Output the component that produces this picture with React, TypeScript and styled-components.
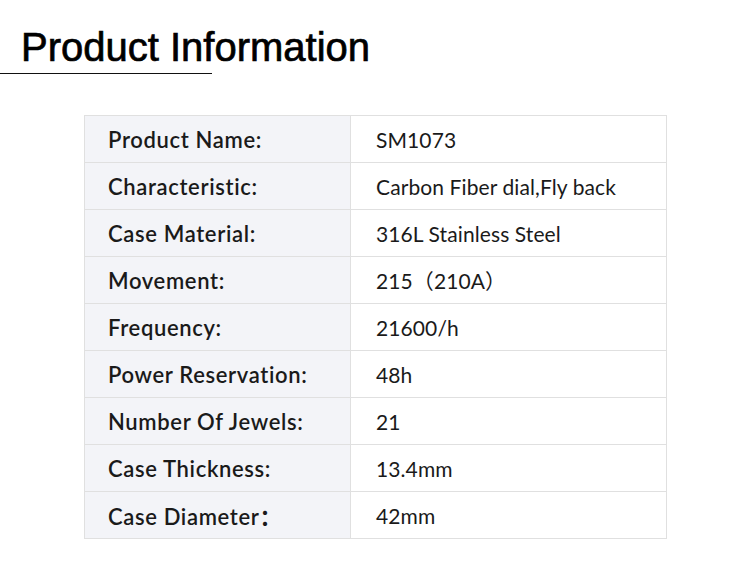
import React from "react";
import styled, { createGlobalStyle } from "styled-components";

const Global = createGlobalStyle`
  html, body { margin: 0; padding: 0; background: #fff; }
  body { width: 750px; height: 583px; overflow: hidden; }
`;

const Page = styled.div`
  width: 750px;
  height: 583px;
  background: #fff;
  display: flex;
  flex-direction: column;
`;

const Header = styled.header`
  display: flex;
  flex-direction: column;
  padding-top: 24px;
`;

const Title = styled.h1`
  margin: 0 0 0 21px;
  font-family: "Liberation Sans", Arial, sans-serif;
  font-weight: 400;
  font-size: 40px;
  line-height: 46px;
  color: #000;
  -webkit-text-stroke: 0.7px #000;
`;

const Underline = styled.div`
  width: 212px;
  height: 1px;
  background: #111;
  margin-top: 3px;
`;

const Table = styled.table`
  margin: 41px 0 0 84px;
  width: 583px;
  border-collapse: collapse;
  font-family: Lato, "Noto Sans CJK SC", sans-serif;
  color: #1a1a1a;
`;

const Row = styled.tr`
  height: 47px;
`;

const Label = styled.td`
  width: 242px;
  padding: 0 0 0 23px;
  background: #f3f4f8;
  border: 1px solid #e0e0e0;
  font-size: 22px;
  font-weight: 600;
  letter-spacing: 0.65px;
  vertical-align: middle;
  white-space: nowrap;
`;

const Value = styled.td`
  padding: 0 0 0 25px;
  background: #fff;
  border: 1px solid #e0e0e0;
  font-size: 21px;
  font-weight: 400;
  letter-spacing: 0.1px;
  vertical-align: middle;
  white-space: nowrap;
`;

const rows: [string, string][] = [
  ["Product Name:", "SM1073"],
  ["Characteristic:", "Carbon Fiber dial,Fly back"],
  ["Case Material:", "316L Stainless Steel"],
  ["Movement:", "215（210A）"],
  ["Frequency:", "21600/h"],
  ["Power Reservation:", "48h"],
  ["Number Of Jewels:", "21"],
  ["Case Thickness:", "13.4mm"],
  ["Case Diameter：", "42mm"],
];

export default function App() {
  return (
    <Page>
      <Global />
      <Header>
        <Title>Product Information</Title>
        <Underline />
      </Header>
      <Table>
        <tbody>
          {rows.map(([k, v]) => (
            <Row key={k}>
              <Label>{k}</Label>
              <Value>{v}</Value>
            </Row>
          ))}
        </tbody>
      </Table>
    </Page>
  );
}
